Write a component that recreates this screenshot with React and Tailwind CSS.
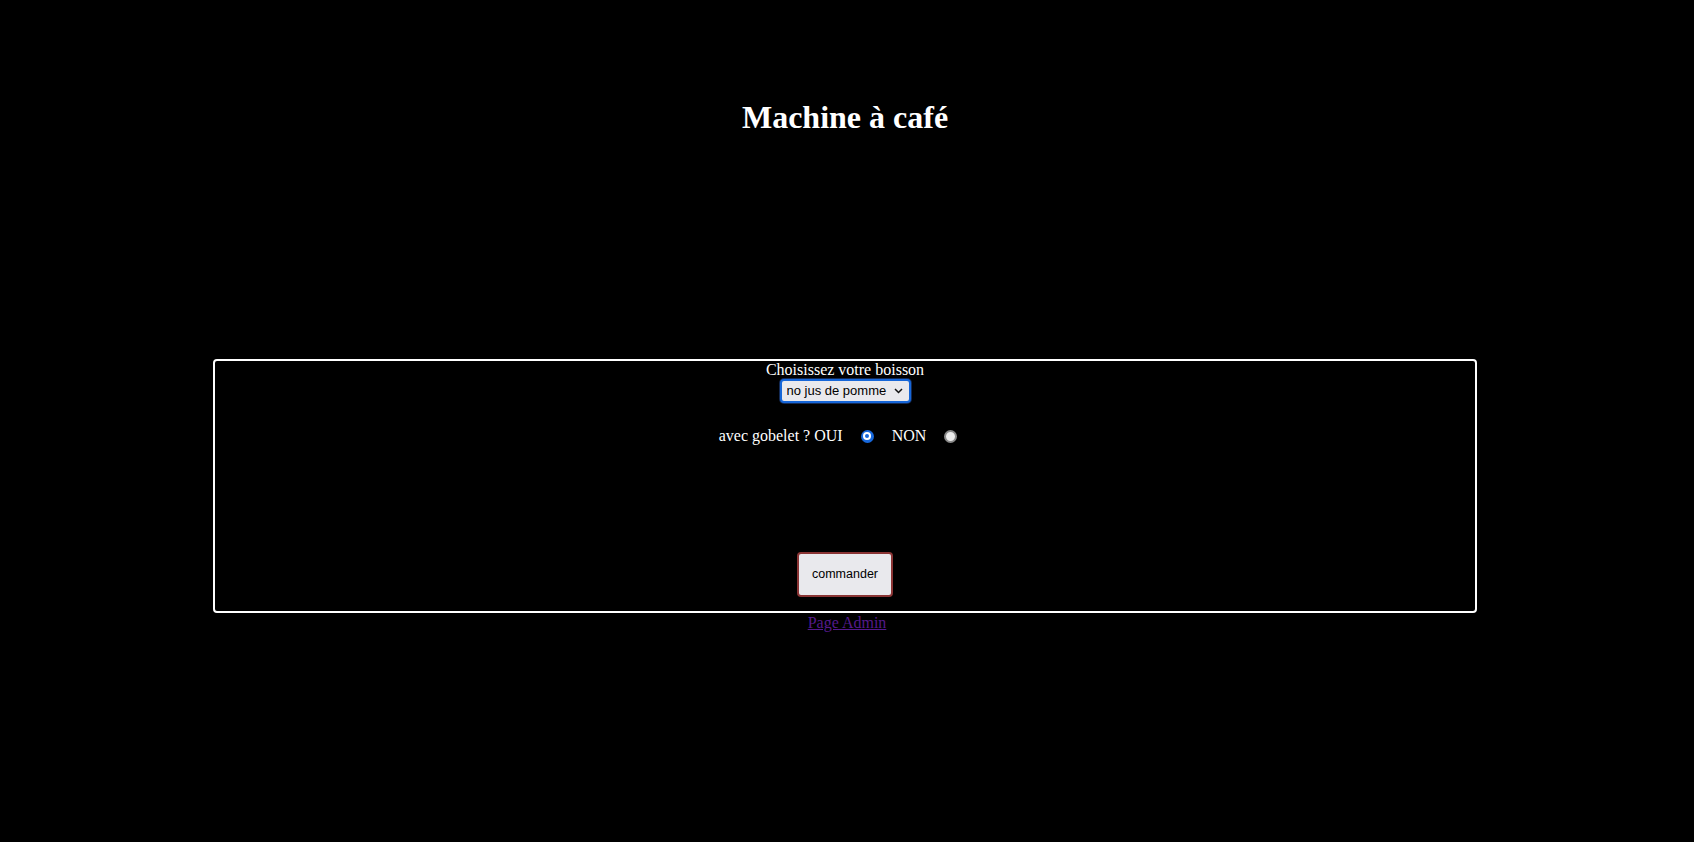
import { useState } from 'react';

function Radio({ checked, onChange }) {
  return (
    <button
      type="button"
      role="radio"
      aria-checked={checked}
      onClick={onChange}
      className={
        checked
          ? 'ml-[18px] flex h-[13px] w-[13px] items-center justify-center rounded-full bg-[#1768dc]'
          : 'ml-[18px] h-[13px] w-[13px] rounded-full border-2 border-[#8a8a8a] bg-[#ececec]'
      }
    >
      {checked && (
        <span className="flex h-[8px] w-[8px] items-center justify-center rounded-full bg-white">
          <span className="h-[4px] w-[4px] rounded-full bg-[#1768dc]" />
        </span>
      )}
    </button>
  );
}

export default function App() {
  const [gobelet, setGobelet] = useState('oui');

  return (
    <div className="min-h-screen w-full bg-black text-white" style={{ fontFamily: '"Liberation Serif", "Times New Roman", serif' }}>
      {/* Title */}
      <h1 className="pr-[4px] pt-[99px] text-center text-[32px] font-bold leading-[37px]">Machine à café</h1>

      {/* Order box */}
      <div className="ml-[213px] mt-[223px] flex h-[254px] w-[1264px] flex-col items-center rounded-[4px] border-2 border-white text-[16px]">
        <div className="leading-[18px]">Choisissez votre boisson</div>
        <div className="-mt-px rounded-[5px] bg-[#132a55] p-px">
          <div className="relative">
            <select
              defaultValue="pomme"
              className="block h-[24px] w-[131px] appearance-none rounded-[4px] border-2 border-[#1666d8] bg-[#e9e9ed] pl-[5px] text-[13px] text-black outline-none"
              style={{ fontFamily: '"Liberation Sans", Arial, sans-serif' }}
            >
              <option value="pomme">no jus de pomme</option>
              <option value="cafe">café</option>
              <option value="the">thé</option>
            </select>
            <svg className="pointer-events-none absolute right-[8px] top-[9px]" width="9" height="6" viewBox="0 0 9 6" fill="none">
              <path d="M1 1l3.5 3.5L8 1" stroke="#111" strokeWidth="1.5" />
            </svg>
          </div>
        </div>

        <div className="mt-[23px] flex items-center pr-[14px] leading-[18px]">
          <span>avec gobelet ? OUI</span>
          <Radio checked={gobelet === 'oui'} onChange={() => setGobelet('oui')} />
          <span className="ml-[18px]">NON</span>
          <Radio checked={gobelet === 'non'} onChange={() => setGobelet('non')} />
        </div>

        <button
          className="mb-[14px] mt-auto h-[45px] w-[96px] rounded-[4px] border-2 border-[#8a3434] bg-[#e9e9ed] text-[12.5px] text-black"
          style={{ fontFamily: '"Liberation Sans", Arial, sans-serif' }}
        >
          commander
        </button>
      </div>

      <div className="pt-px text-center leading-[18px]">
        <a href="#" className="text-[#551a8b] underline">Page Admin</a>
      </div>
    </div>
  );
}
